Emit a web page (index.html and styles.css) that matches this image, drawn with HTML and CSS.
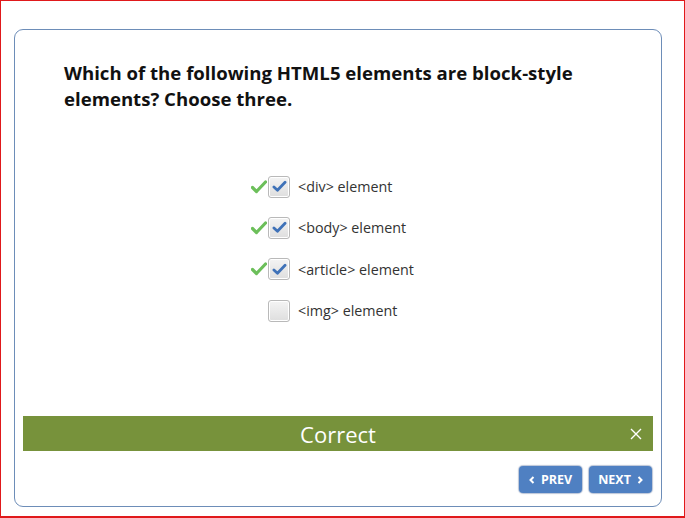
FILE: index.html
```html
<!DOCTYPE html>
<html>
<head>
<meta charset="utf-8">
<link rel="stylesheet" href="styles.css">
</head>
<body>
<div class="frame">
  <div class="card">
    <h1 class="question">Which of the following HTML5 elements are block-style elements? Choose three.</h1>
    <ul class="options">
      <li class="option">
        <span class="mark"><svg viewBox="0 0 16 14" width="16" height="14"><path d="M1.5 7.5 L5.5 11.5 L14.5 2" fill="none" stroke="#6cbf5a" stroke-width="3.2" stroke-linecap="round" stroke-linejoin="round"/></svg></span>
        <span class="box checked"><svg viewBox="0 0 16 14" width="15" height="13"><path d="M2 7.5 L5.8 11 L14 2.5" fill="none" stroke="#3f72b8" stroke-width="3" stroke-linecap="round" stroke-linejoin="round"/></svg></span>
        <span class="label">&lt;div&gt; element</span>
      </li>
      <li class="option">
        <span class="mark"><svg viewBox="0 0 16 14" width="16" height="14"><path d="M1.5 7.5 L5.5 11.5 L14.5 2" fill="none" stroke="#6cbf5a" stroke-width="3.2" stroke-linecap="round" stroke-linejoin="round"/></svg></span>
        <span class="box checked"><svg viewBox="0 0 16 14" width="15" height="13"><path d="M2 7.5 L5.8 11 L14 2.5" fill="none" stroke="#3f72b8" stroke-width="3" stroke-linecap="round" stroke-linejoin="round"/></svg></span>
        <span class="label">&lt;body&gt; element</span>
      </li>
      <li class="option">
        <span class="mark"><svg viewBox="0 0 16 14" width="16" height="14"><path d="M1.5 7.5 L5.5 11.5 L14.5 2" fill="none" stroke="#6cbf5a" stroke-width="3.2" stroke-linecap="round" stroke-linejoin="round"/></svg></span>
        <span class="box checked"><svg viewBox="0 0 16 14" width="15" height="13"><path d="M2 7.5 L5.8 11 L14 2.5" fill="none" stroke="#3f72b8" stroke-width="3" stroke-linecap="round" stroke-linejoin="round"/></svg></span>
        <span class="label">&lt;article&gt; element</span>
      </li>
      <li class="option">
        <span class="mark"></span>
        <span class="box"></span>
        <span class="label">&lt;img&gt; element</span>
      </li>
    </ul>
    <div class="feedback">
      <span class="feedback-text">Correct</span>
      <span class="close"><svg viewBox="0 0 12 12" width="12" height="12"><path d="M1 1 L11 11 M11 1 L1 11" stroke="#ffffff" stroke-width="1.4" fill="none"/></svg></span>
    </div>
    <div class="nav">
      <button class="btn"><svg viewBox="0 0 6 8" width="6" height="8"><path d="M4.5 1 L1.5 4 L4.5 7" fill="none" stroke="#fff" stroke-width="2"/></svg>PREV</button>
      <button class="btn">NEXT<svg viewBox="0 0 6 8" width="6" height="8"><path d="M1.5 1 L4.5 4 L1.5 7" fill="none" stroke="#fff" stroke-width="2"/></svg></button>
    </div>
  </div>
</div>
</body>
</html>
```

FILE: styles.css
```css
html, body {
  margin: 0;
  padding: 0;
  background: #ffffff;
}
.frame {
  width: 685px;
  height: 518px;
  box-sizing: border-box;
  border: 1px solid #e0191b;
  border-bottom-width: 2px;
  padding: 28px 22px 0 13px;
  font-family: "Open Sans", "Liberation Sans", sans-serif;
}
.card {
  box-sizing: border-box;
  height: 478px;
  border: 1px solid #6d8db8;
  border-radius: 9px;
  padding: 30px 8px 12px 8px;
  display: flex;
  flex-direction: column;
}
.question {
  margin: 0 0 0 41px;
  font-size: 18.6px;
  line-height: 26px;
  font-weight: 700;
  color: #111111;
  width: 560px;
}
.options {
  list-style: none;
  margin: 54px 0 0 227px;
  padding: 0;
}
.option {
  height: 41.3px;
  display: flex;
  align-items: center;
}
.mark {
  width: 18px;
  height: 14px;
  display: flex;
  margin-left: 1px;
  margin-right: -1px;
}
.box {
  width: 22px;
  height: 22px;
  box-sizing: border-box;
  border: 1px solid #b9b9b9;
  border-radius: 3px;
  background: linear-gradient(#f4f4f4, #dedede);
  box-shadow: inset 0 0 0 1px #ffffff;
  display: flex;
  align-items: center;
  justify-content: center;
}
.label {
  margin-left: 8px;
  font-size: 14.3px;
  color: #333333;
}
.feedback {
  margin-top: 85px;
  height: 35px;
  background: #77923b;
  position: relative;
  display: flex;
  align-items: center;
  justify-content: center;
}
.feedback-text {
  color: #ffffff;
  font-size: 22px;
}
.close {
  position: absolute;
  right: 11px;
  top: 12px;
  display: flex;
}
.nav {
  margin-top: 15px;
  display: flex;
  justify-content: flex-end;
  gap: 7px;
  padding-right: 1px;
}
.btn {
  width: 63px;
  height: 27px;
  border: none;
  border-radius: 4px;
  background: #4f80c2;
  box-shadow: 0 0 1px 1px rgba(60, 90, 140, 0.35);
  color: #ffffff;
  font-family: "Open Sans", "Liberation Sans", sans-serif;
  font-weight: 700;
  font-size: 12.5px;
  display: flex;
  align-items: center;
  justify-content: center;
  gap: 6px;
  padding: 0;
}
```
